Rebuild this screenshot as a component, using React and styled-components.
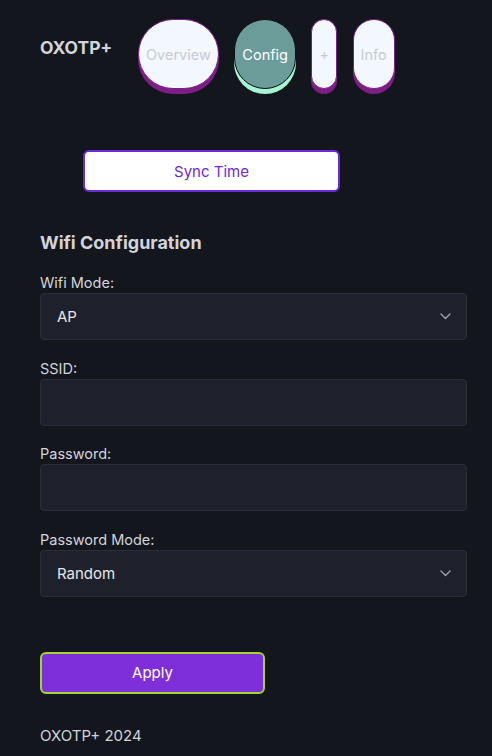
import React from 'react'
import styled, { createGlobalStyle } from 'styled-components'

const GlobalStyle = createGlobalStyle`
	* { box-sizing: border-box; }
	body {
		margin: 0;
		background: #14161d;
		font-family: Inter, "Noto Sans", sans-serif;
		color: #d1d5db;
	}
`

const tabs = [
	{ label: 'Overview' },
	{ label: 'Config', active: true },
	{ label: '+' },
	{ label: 'Info' }
]

const Chevron = () => (
	<svg width="11" height="7" viewBox="0 0 11 7" fill="none">
		<polyline points="1,1 5.5,5.5 10,1" stroke="#9ca3af" strokeWidth="1.4" strokeLinecap="round" strokeLinejoin="round" />
	</svg>
)

const SelectField = ({ label, value }) => (
	<Field>
		<Label>{label}</Label>
		<Box>
			<span>{value}</span>
			<Chevron />
		</Box>
	</Field>
)

const InputField = ({ label }) => (
	<Field>
		<Label>{label}</Label>
		<Box />
	</Field>
)

const App = () => (
	<Page>
		<GlobalStyle />
		<Header>
			<Brand>OXOTP+</Brand>
			<Nav>
				{tabs.map(t => (
					<Tab key={t.label} $active={t.active}>{t.label}</Tab>
				))}
			</Nav>
		</Header>

		<SyncButton>Sync Time</SyncButton>

		<Heading>Wifi Configuration</Heading>
		<SelectField label="Wifi Mode:" value="AP" />
		<InputField label="SSID:" />
		<InputField label="Password:" />
		<SelectField label="Password Mode:" value="Random" />

		<ApplyButton>Apply</ApplyButton>
		<Footer>OXOTP+ 2024</Footer>
	</Page>
)

const Page = styled.div`
	padding: 19px 25px 20px 40px;
`
const Header = styled.header`
	display: flex;
	align-items: flex-start;
`
const Brand = styled.h1`
	margin: 18px 26px 0 0;
	font-size: 17.5px;
	line-height: 22px;
	font-weight: 700;
	color: #d1d5db;
`
const Nav = styled.nav`
	display: flex;
	gap: 15.5px;
`
const Tab = styled.button`
	height: 70px;
	padding: 0 7px;
	border-radius: 9999px;
	font-family: inherit;
	font-size: 14.5px;
	cursor: pointer;
	border: 1px solid ${p => (p.$active ? '#0b0d10' : '#7a1f8c')};
	background: ${p => (p.$active ? '#6b9c99' : '#f3f8fe')};
	color: ${p => (p.$active ? '#ffffff' : '#c7cbd3')};
	box-shadow: 0 5px 0 ${p => (p.$active ? '#a6f4d2' : '#7e1d86')};
`
const SyncButton = styled.button`
	display: block;
	margin: 61px 0 0 43px;
	width: 257px;
	height: 42px;
	background: #ffffff;
	border: 2px solid #6d28d9;
	border-radius: 6px;
	color: #6d28d9;
	font-family: inherit;
	font-size: 15px;
	cursor: pointer;
`
const Heading = styled.h2`
	margin: 39px 0 18px;
	font-size: 18px;
	line-height: 24px;
	font-weight: 700;
	color: #d1d5db;
`
const Field = styled.div`
	margin-bottom: 18.5px;
`
const Label = styled.div`
	font-size: 14.5px;
	line-height: 20px;
	color: #d1d5db;
`
const Box = styled.div`
	display: flex;
	align-items: center;
	justify-content: space-between;
	height: 47px;
	padding: 0 15px 0 16px;
	background: #1e212b;
	border: 1px solid #2a2e39;
	border-radius: 4px;
	font-size: 15px;
	color: #e5e7eb;
`
const ApplyButton = styled.button`
	display: block;
	margin-top: 55px;
	width: 225px;
	height: 42px;
	background: #7e2fd9;
	border: 2px solid #a3d635;
	border-radius: 6px;
	color: #ffffff;
	font-family: inherit;
	font-size: 15px;
	cursor: pointer;
`
const Footer = styled.footer`
	margin-top: 32px;
	font-size: 15px;
	line-height: 20px;
	color: #d1d5db;
`

export default App
